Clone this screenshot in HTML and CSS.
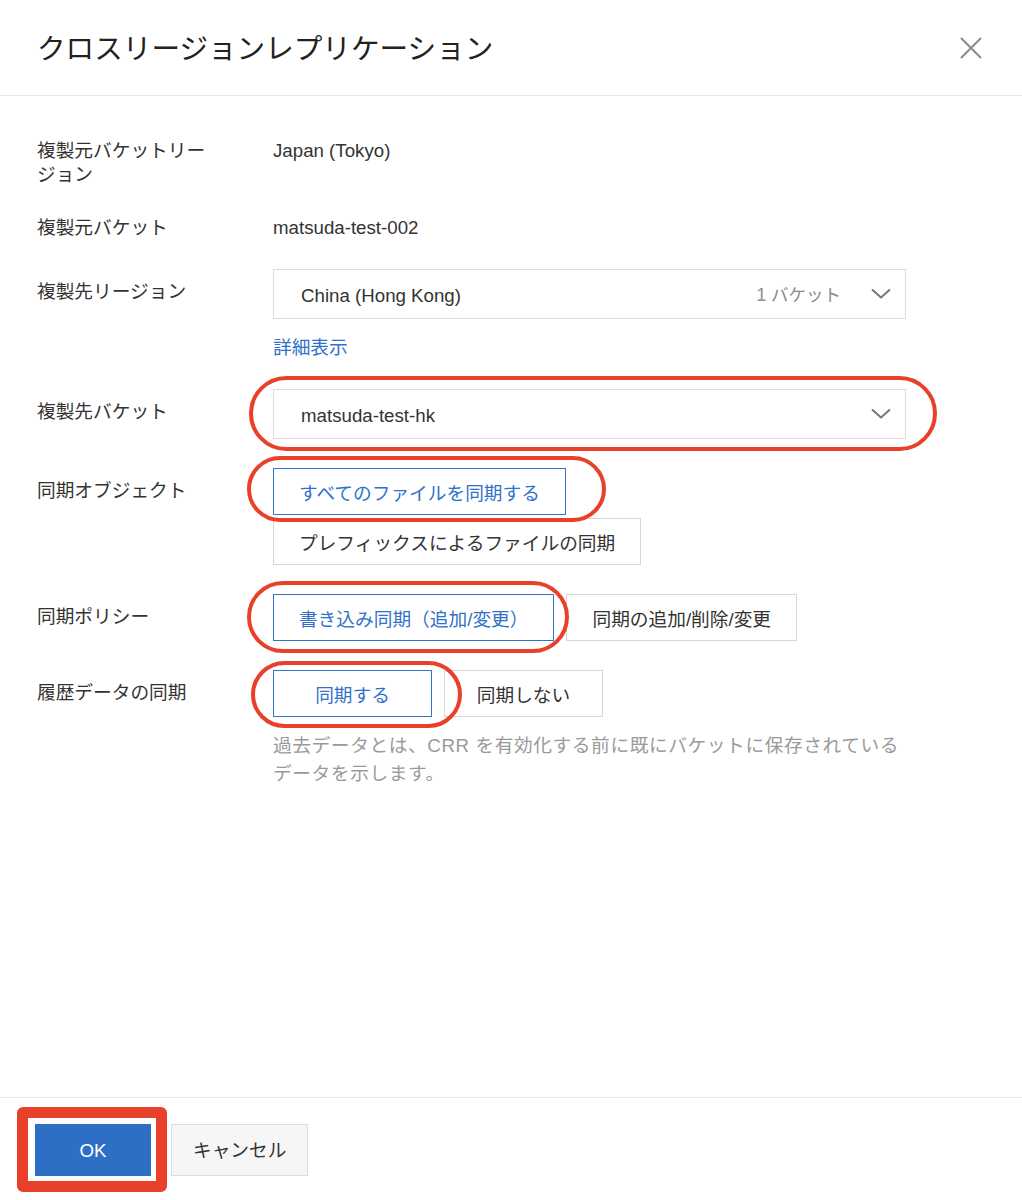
FILE: index.html
```html
<!DOCTYPE html>
<html lang="ja">
<head>
<meta charset="utf-8">
<title>クロスリージョンレプリケーション</title>
<link rel="stylesheet" href="styles.css">
</head>
<body>
<div class="dialog">
  <header class="dlg-head">
    <h1 class="dlg-title">クロスリージョンレプリケーション</h1>
    <button class="close" type="button" aria-label="閉じる">
      <svg width="22" height="22" viewBox="0 0 22 22"><path d="M1 1L21 21M21 1L1 21" stroke="#8a8a8a" stroke-width="2" fill="none"/></svg>
    </button>
  </header>

  <main class="dlg-body">
    <div class="row">
      <div class="label">複製元バケットリージョン</div>
      <div class="value">Japan (Tokyo)</div>
    </div>

    <div class="row">
      <div class="label">複製元バケット</div>
      <div class="value">matsuda-test-002</div>
    </div>

    <div class="row">
      <div class="label label-ctrl">複製先リージョン</div>
      <div class="field">
        <div class="select">
          <span class="select-text">China (Hong Kong)</span>
          <span class="select-meta">1 バケット</span>
          <svg class="chev" width="20" height="11" viewBox="0 0 20 11"><path d="M1 1.5L10 9.5L19 1.5" fill="none" stroke="#777" stroke-width="2"/></svg>
        </div>
        <a class="link" href="#">詳細表示</a>
      </div>
    </div>

    <div class="row">
      <div class="label label-ctrl">複製先バケット</div>
      <div class="field">
        <div class="select">
          <span class="select-text">matsuda-test-hk</span>
          <svg class="chev" width="20" height="11" viewBox="0 0 20 11"><path d="M1 1.5L10 9.5L19 1.5" fill="none" stroke="#777" stroke-width="2"/></svg>
          <span class="mark mark-select"></span>
        </div>
      </div>
    </div>

    <div class="row">
      <div class="label label-ctrl">同期オブジェクト</div>
      <div class="options">
        <button class="opt is-active" type="button">すべてのファイルを同期する<span class="mark mark-all"></span></button>
        <button class="opt" type="button">プレフィックスによるファイルの同期</button>
      </div>
    </div>

    <div class="row">
      <div class="label label-ctrl">同期ポリシー</div>
      <div class="options">
        <button class="opt is-active" type="button">書き込み同期（追加/変更）<span class="mark mark-write"></span></button>
        <button class="opt" type="button">同期の追加/削除/変更</button>
      </div>
    </div>

    <div class="row">
      <div class="label label-ctrl">履歴データの同期</div>
      <div class="field">
        <div class="options">
          <button class="opt is-active" type="button">同期する<span class="mark mark-sync"></span></button>
          <button class="opt" type="button">同期しない</button>
        </div>
        <p class="hint">過去データとは、CRR を有効化する前に既にバケットに保存されているデータを示します。</p>
      </div>
    </div>
  </main>

  <footer class="dlg-foot">
    <button class="btn btn-primary" type="button">OK<span class="mark mark-ok"></span></button>
    <button class="btn btn-default" type="button">キャンセル</button>
  </footer>
</div>
</body>
</html>
```

FILE: styles.css
```css
* { box-sizing: border-box; }

html, body {
  margin: 0;
  padding: 0;
  background: #fff;
}

body {
  font-family: "Liberation Sans", "Noto Sans CJK JP", sans-serif;
  font-size: 18.7px;
  color: #333;
}

.dialog {
  width: 1022px;
  height: 1200px;
  display: flex;
  flex-direction: column;
}

/* header */
.dlg-head {
  flex: none;
  height: 96px;
  border-bottom: 1px solid #e7e7e7;
  display: flex;
  align-items: center;
  justify-content: space-between;
  padding: 0 40px 0 37px;
}

.dlg-title {
  margin: 3px 0 0;
  font-size: 28.6px;
  font-weight: 400;
  line-height: 1;
  color: #222;
}

.close {
  width: 22px;
  height: 22px;
  padding: 0;
  border: 0;
  background: none;
  display: flex;
  margin-top: 1px;
}

/* body */
.dlg-body {
  flex: 1;
  padding: 43px 0 0 37px;
  display: flex;
  flex-direction: column;
  gap: 29px;
}

.row {
  display: grid;
  grid-template-columns: 236px 633px;
  align-items: start;
}

.label {
  max-width: 180px;
  line-height: 24px;
  color: #333;
}

.label-ctrl {
  padding-top: 11px;
}

.value {
  line-height: 24px;
  color: #333;
}

.field {
  display: flex;
  flex-direction: column;
  align-items: flex-start;
}

.select {
  position: relative;
  width: 633px;
  height: 50px;
  border: 1px solid #dcdcdc;
  background: #fff;
  display: flex;
  align-items: center;
  padding: 4px 14px 0 27px;
}

.select-text {
  flex: 1;
  color: #333;
}

.select-meta {
  font-size: 17.5px;
  color: #8c8c8c;
  margin: -5px 30px 0 0;
}

.chev {
  display: block;
  flex: none;
  margin-top: -6px;
}

.link {
  display: block;
  margin-top: 17px;
  line-height: 24px;
  color: #2f72c8;
  text-decoration: none;
}

.options {
  display: flex;
  flex-wrap: wrap;
  column-gap: 12px;
  row-gap: 3px;
}

.opt {
  position: relative;
  height: 47px;
  min-width: 159px;
  padding: 5px 25px 0;
  border: 1px solid #d6d6d6;
  background: #fff;
  font: inherit;
  color: #333;
  line-height: 1;
  white-space: nowrap;
}

.opt.is-active {
  border-color: #3174c9;
  color: #2f72c8;
}

.hint {
  margin: 15px 0 0;
  width: 633px;
  line-height: 28px;
  letter-spacing: 0.6px;
  color: #9a9a9a;
}

/* footer */
.dlg-foot {
  flex: none;
  height: 103px;
  border-top: 1px solid #e7e7e7;
  display: flex;
  align-items: flex-start;
  padding: 26px 0 0 35px;
}

.btn {
  height: 52px;
  min-width: 116px;
  padding: 3px 21px 0;
  font: inherit;
  line-height: 1;
  border: 1px solid;
}

.btn-primary {
  position: relative;
  background: #2e6fc6;
  border-color: #2e6fc6;
  color: #fff;
}

.btn-default {
  margin-left: 20px;
  background: #f6f6f6;
  border-color: #dcdcdc;
  color: #333;
}

/* red annotation marks overlaid on the screenshot */
.mark {
  position: absolute;
  z-index: 2;
  border: 4px solid #e8402a;
  border-radius: 36px;
  pointer-events: none;
}

.mark-select { left: -25px; top: -14px; right: -32px; bottom: -13px; border-radius: 38px; }
.mark-all    { left: -27px; top: -13px; right: -41px; bottom: -8px; border-radius: 34px; }
.mark-write  { left: -27px; top: -14px; right: -16px; bottom: -13px; }
.mark-sync   { left: -23px; top: -10px; right: -31px; bottom: -12px; border-radius: 34px; }

.mark-ok {
  left: -19px;
  top: -18px;
  right: -17px;
  bottom: -17px;
  border-width: 11px;
  border-radius: 6px;
}
```
